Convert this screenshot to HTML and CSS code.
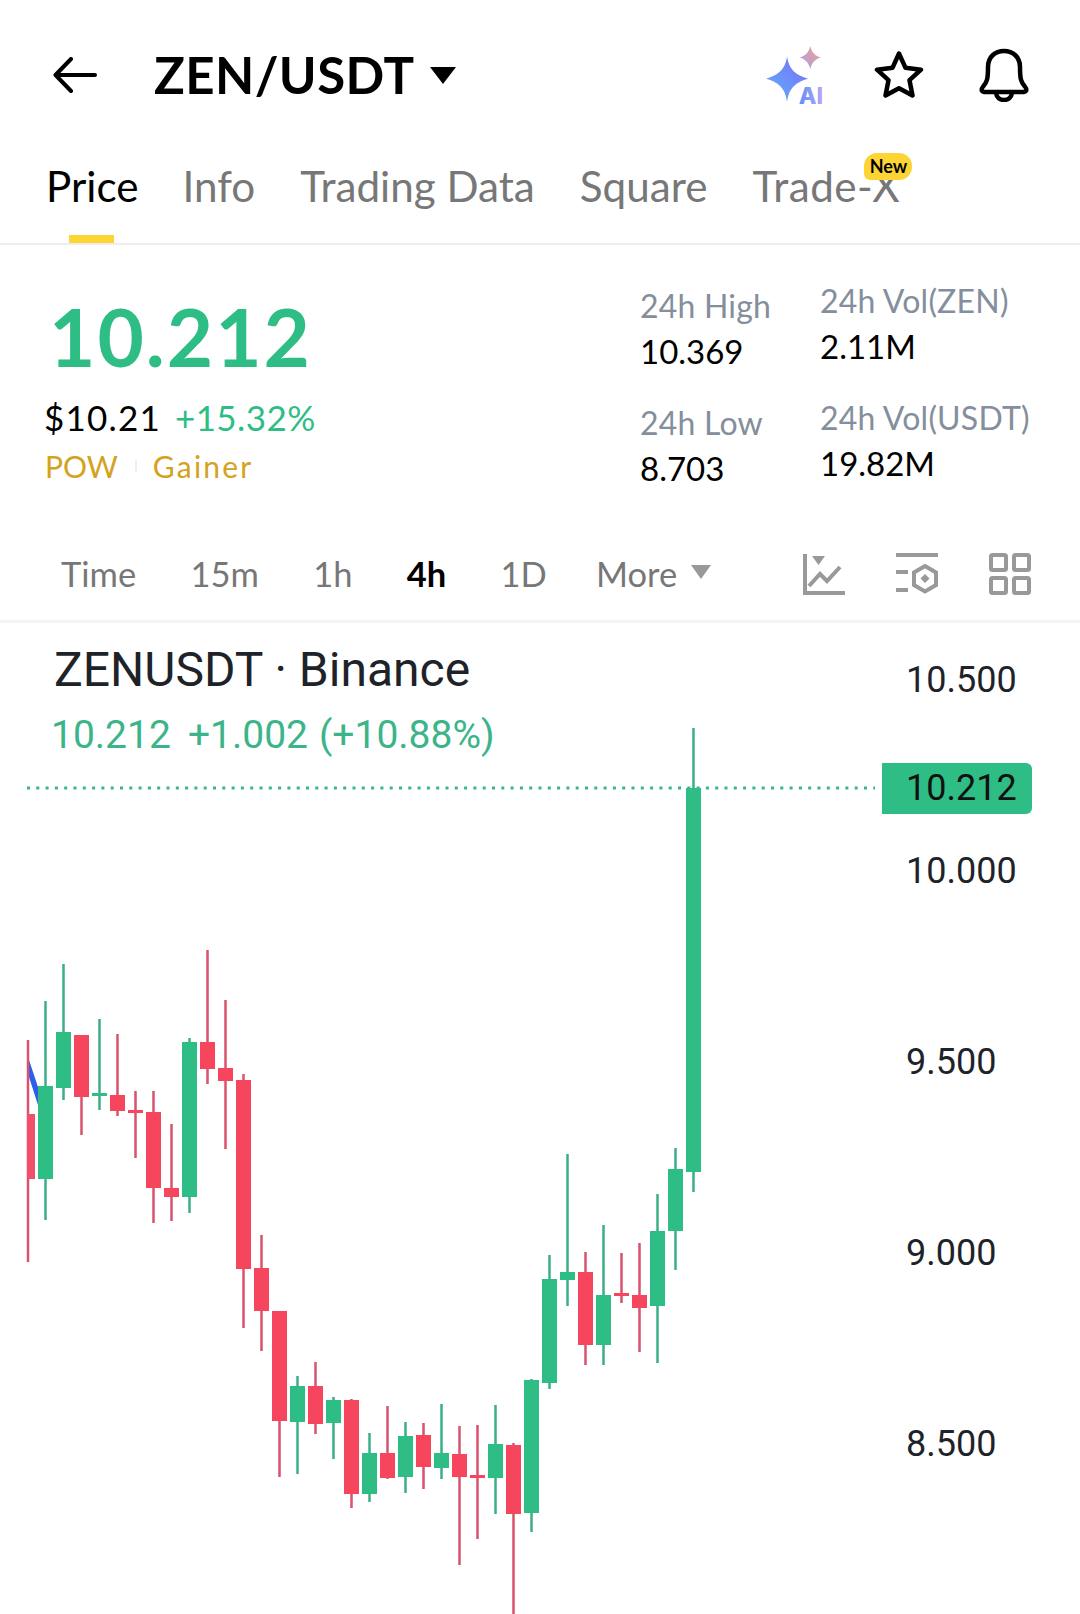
FILE: index.html
```html
<!DOCTYPE html>
<html lang="en">
<head>
<meta charset="utf-8">
<title>ZEN/USDT</title>
<link rel="stylesheet" href="styles.css">
</head>
<body>
<main class="app">
  <header class="topbar">
    <svg class="icon-back" viewBox="0 0 44 36"><path d="M42 18H3M18 2 2.500 18 18 34"/></svg>
    <h1 class="pair">ZEN/USDT</h1>
    <span class="pair-caret"></span>
    <div class="top-actions">
      <svg class="icon-ai" viewBox="0 0 56 56">
        <defs>
          <linearGradient id="gBig" x1="0" y1="1" x2="1" y2="0"><stop offset="0" stop-color="#5fb2fb"/><stop offset="1" stop-color="#7a6cf8"/></linearGradient>
          <linearGradient id="gSmall" x1="0" y1="1" x2="1" y2="0"><stop offset="0" stop-color="#a99cf7"/><stop offset="1" stop-color="#f3a27e"/></linearGradient>
          <linearGradient id="gText" x1="0" y1="0" x2="1" y2="0"><stop offset="0" stop-color="#5f8ff7"/><stop offset="1" stop-color="#bba6f4"/></linearGradient>
        </defs>
        <path fill="url(#gBig)" d="M20 10c1.500 9 5 17 20 21-15 4-18.500 12-20 22-1.500-10-5-18-20-22 15-4 18.500-12 20-21z"/>
        <path fill="url(#gSmall)" d="M42 0c1.500 6 4 9 10 11-6 2-8.500 5-10 11-1.500-6-4-9-10-11 6-2 8.500-5 10-11z"/>
        <text class="ai-text" x="31" y="55" fill="url(#gText)">AI</text>
      </svg>
      <svg class="icon-star" viewBox="0 0 50 50"><path d="M25 3.500l6.400 14.200 15.600 2-11.500 10.500 3 15.300L25 38.300l-13.500 7.200 3-15.300L3 19.700l15.600-2z"/></svg>
      <svg class="icon-bell" viewBox="0 0 50 54"><path d="M3 43c-1-2 0-3 1.500-5C8 34 9 31 9 19 9 9 16 3 25 3s16 6 16 16c0 12 1 15 4.500 19 1.500 2 2.500 3 1.500 5-.4.700-1 1-2 1H5c-1 0-1.600-.3-2-1zM17 45c.6 4.500 4 7 8 7s7.400-2.500 8-7"/></svg>
    </div>
  </header>

  <nav class="tabs">
    <a class="tab tab-active">Price</a>
    <a class="tab">Info</a>
    <a class="tab tab-wide">Trading Data</a>
    <a class="tab tab-wide">Square</a>
    <a class="tab tab-new">Trade-X<span class="badge">New</span></a>
  </nav>

  <section class="quote">
    <div class="quote-main">
      <div class="last-price">10.212</div>
      <div class="fiat-row"><span class="fiat">$10.21</span><span class="change">+15.32%</span></div>
      <div class="tags"><span>POW</span><i class="tag-sep"></i><span class="tag-wide">Gainer</span></div>
    </div>
    <div class="stats stats-a">
      <div class="stat"><div class="stat-label">24h High</div><div class="stat-value">10.369</div></div>
      <div class="stat"><div class="stat-label">24h Low</div><div class="stat-value">8.703</div></div>
    </div>
    <div class="stats stats-b">
      <div class="stat"><div class="stat-label">24h Vol(ZEN)</div><div class="stat-value">2.11M</div></div>
      <div class="stat"><div class="stat-label">24h Vol(USDT)</div><div class="stat-value">19.82M</div></div>
    </div>
  </section>

  <section class="toolbar">
    <a class="range">Time</a>
    <a class="range">15m</a>
    <a class="range">1h</a>
    <a class="range range-active">4h</a>
    <a class="range">1D</a>
    <a class="range range-more">More<span class="more-caret"></span></a>
    <div class="tools">
      <svg class="tool" viewBox="0 0 42 42"><path d="M2 1v39h40M6 33l11-12 7 7 13-14"/><path class="tool-fill" d="M9 3h13l-6.500 9z"/></svg>
      <svg class="tool" viewBox="0 0 42 42"><path d="M0 2h42M0 19h12M0 37h12"/><path d="M29 13l11 6.500v12.500l-11 6.500-11-6.500V19.500z"/><path class="tool-fill" d="M29 21l4.500 4.500-4.500 4.500-4.500-4.500z"/></svg>
      <svg class="tool" viewBox="0 0 42 42"><rect x="2" y="2" width="15" height="15" rx="1.500"/><rect x="25" y="2" width="15" height="15" rx="1.500"/><rect x="2" y="25" width="15" height="15" rx="1.500"/><rect x="25" y="25" width="15" height="15" rx="1.500"/></svg>
    </div>
  </section>

  <section class="chart">
    <svg class="candles" viewBox="0 623 1080 991">
      <path class="last-line" d="M27 788H875"/>
      <path class="blue-line" d="M29 1060 38 1087V1105L29 1077z"/>
      <path class="wick wick-down" d="M28 1040V1262M81.500 1035V1135M117.500 1034V1116M135.500 1091V1158M153.500 1091V1223M171.500 1124V1221M207.500 950V1084M225.500 1000V1149M243.500 1074V1328M261.500 1235V1351M279.500 1311V1477M315.500 1362V1434M351.500 1399V1508M387.500 1406V1479M423.500 1423V1489M459.500 1426V1565M477.500 1425V1539M513.500 1443V1614M585.500 1252V1365M621.500 1253V1303M639.500 1243V1352"/>
      <path class="wick wick-up" d="M45.500 1001V1220M63.500 964V1100M99.500 1019V1110M189.500 1038V1213M297.500 1376V1474M333.500 1397V1459M369.500 1433V1502M405.500 1422V1493M441.500 1404V1479M495.500 1405V1514M531.500 1379V1532M549.500 1255V1389M567.500 1154V1306M603.500 1225V1365M657.500 1194V1363M675.500 1148V1270M693.500 728V1192"/>
      <path class="body-stub" d="M31 1114V1179"/>
      <path class="body body-down" d="M81.500 1035V1097M117.500 1095V1111M135.500 1110V1113M153.500 1112V1188M171.500 1188V1197M207.500 1042V1069M225.500 1068V1081M243.500 1080V1269M261.500 1268V1311M279.500 1311V1421M315.500 1386V1424M351.500 1400V1494M387.500 1453V1478M423.500 1435V1467M459.500 1454V1477M477.500 1475V1478M513.500 1445V1514M585.500 1272V1345M621.500 1293V1296M639.500 1295V1308"/>
      <path class="body body-up" d="M45.500 1086V1179M63.500 1032V1088M99.500 1093V1096M189.500 1042V1197M297.500 1386V1422M333.500 1400V1423M369.500 1453V1494M405.500 1436V1477M441.500 1453V1468M495.500 1444V1478M531.500 1380V1513M549.500 1279V1383M567.500 1272V1280M603.500 1295V1345M657.500 1231V1306M675.500 1169V1231M693.500 788V1172"/>
    </svg>
    <div class="legend">
      <div class="legend-title">ZENUSDT · Binance</div>
      <div class="legend-values"><span>10.212</span><span>+1.002</span><span>(+10.88%)</span></div>
    </div>
    <div class="axis">
      <span>10.500</span>
      <span>10.000</span>
      <span>9.500</span>
      <span>9.000</span>
      <span>8.500</span>
    </div>
    <div class="price-tag">10.212</div>
  </section>
</main>
</body>
</html>
```

FILE: styles.css
```css
* { box-sizing: border-box; }
html, body { margin: 0; padding: 0; background: #fff; }
body { font-family: "Lato", "Liberation Sans", sans-serif; color: #000; }
.app { width: 1080px; height: 1614px; overflow: hidden; display: flex; flex-direction: column; }

.topbar { height: 150px; display: flex; align-items: center; padding: 0 51px 0 53px; }
.icon-back { width: 44px; height: 36px; margin-right: 57px; fill: none; stroke: #000; stroke-width: 4; stroke-linecap: round; stroke-linejoin: round; }
.pair { margin: 0; font-size: 51px; line-height: 60px; font-weight: 700; letter-spacing: .4px; }
.pair-caret { width: 0; height: 0; margin-left: 16px; border-left: 13px solid transparent; border-right: 13px solid transparent; border-top: 17px solid #000; }
.top-actions { margin-left: auto; display: flex; align-items: center; gap: 52px; }
.icon-ai { width: 59px; height: 59px; margin-right: -3px; overflow: visible; }
.ai-text { font-family: "Inter", sans-serif; font-weight: 800; font-size: 22px; }
.icon-star { width: 50px; height: 50px; margin-right: 3px; fill: none; stroke: #000; stroke-width: 4.500; stroke-linejoin: round; }
.icon-bell { width: 50px; height: 54px; fill: none; stroke: #000; stroke-width: 4.500; stroke-linejoin: round; stroke-linecap: round; }

.tabs { height: 95px; display: flex; gap: 44px; padding: 0 0 0 46px; border-bottom: 2px solid #eeeeee; }
.tab { position: relative; height: 64px; font-size: 42.200px; line-height: 64px; color: #777; margin-top: 4px; }
.tab-wide { margin-left: 1px; }
.tab-new { letter-spacing: .5px; margin-left: 1px; }
.tab-active { color: #000; }
.tab-active::after { content: ""; position: absolute; left: 23px; top: 81px; width: 45px; height: 8px; background: #fcd535; }
.badge { position: absolute; left: 112px; top: -1px; width: 48px; height: 27px; border-radius: 13px 13px 13px 6px; background: #fcd535; color: #000; font-size: 18px; font-weight: 700; letter-spacing: 0; line-height: 27px; text-align: center; }

.quote { height: 297px; display: flex; }
.quote-main { width: 640px; padding: 41px 0 0 45px; }
.last-price { font-size: 80px; line-height: 100px; font-weight: 700; letter-spacing: 2px; color: #2ebd85; padding-left: 4px; }
.fiat-row { display: flex; gap: 14px; margin-top: 11px; line-height: 40px; font-size: 35px; }
.fiat { letter-spacing: 1.200px; margin-left: -1px; }
.change { color: #2ebd85; letter-spacing: .4px; }
.tags { display: flex; align-items: center; font-size: 30px; line-height: 38px; color: #d4a31d; margin-top: 10px; }
.tag-sep { width: 2px; height: 12px; margin: 0 16px 0 17px; background: #efefef; }
.tag-wide { letter-spacing: 2.200px; }
.stats { display: flex; flex-direction: column; gap: 28px; }
.stats-a { width: 180px; padding-top: 39px; }
.stats-b { padding-top: 34px; }
.stat-label { font-size: 32px; line-height: 44px; letter-spacing: .2px; color: #848e9c; }
.stat-value { font-size: 33px; line-height: 44px; color: #000; margin-top: 1px; }

.toolbar { height: 81px; display: flex; align-items: center; padding: 0 49px 14px 61px; gap: 54.300px; border-bottom: 3px solid #f4f4f4; }
.range { font-size: 34.500px; line-height: 44px; color: #777; }
.range-active { color: #000; font-weight: 700; }
.range-more { display: flex; align-items: center; margin-left: -5px; }
.more-caret { width: 0; height: 0; margin-left: 14px; margin-top: -4px; border-left: 10.500px solid transparent; border-right: 10.500px solid transparent; border-top: 14px solid #999; }
.tools { margin-left: auto; display: flex; gap: 51px; }
.tool { width: 42px; height: 42px; fill: none; stroke: #999; stroke-width: 4; }
.tool-fill { fill: #999; stroke: none; }

.chart { position: relative; flex: 1; }
.candles { position: absolute; left: 0; top: 0; width: 1080px; height: 991px; }
.last-line { fill: none; stroke: #3cb48a; stroke-width: 3; stroke-dasharray: 3 6.300; }
.blue-line { fill: #2b5fe8; }
.wick { fill: none; stroke-width: 2.500; }
.wick-down { stroke: #d9536d; }
.wick-up { stroke: #3cae87; }
.body { fill: none; stroke-width: 15; }
.body-down { stroke: #f6465d; }
.body-up { stroke: #2ebd85; }
.body-stub { fill: none; stroke: #f0506a; stroke-width: 8; }

.legend { position: relative; padding: 19px 0 0 51px; font-family: "Roboto", sans-serif; }
.legend-title { font-size: 48px; line-height: 56px; color: #1e2329; padding-left: 3px; }
.legend-values { display: flex; gap: 17px; font-size: 39px; line-height: 50px; color: #3cb48a; margin-top: 12px; }
.legend-values span:last-child { margin-left: -6px; }
.axis { position: absolute; left: 906px; top: 32px; display: grid; grid-auto-rows: 191px; font-family: "Roboto", sans-serif; font-size: 36px; line-height: 50px; color: #1e2329; }
.price-tag { position: absolute; left: 882px; top: 140px; width: 150px; height: 51px; padding-left: 24px; background: #2ebd85; border-radius: 0 6px 6px 0; font-family: "Roboto", sans-serif; font-size: 36px; line-height: 51px; color: #111; }
```
